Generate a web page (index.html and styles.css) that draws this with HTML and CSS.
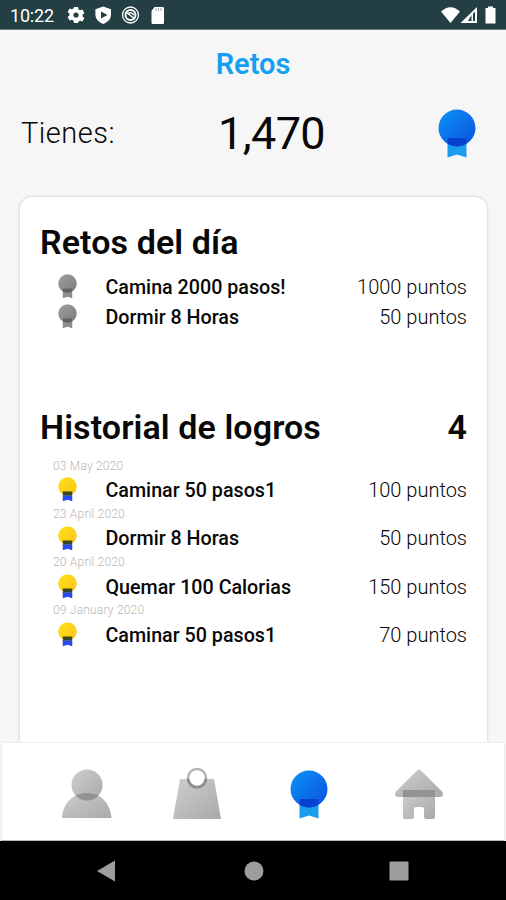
FILE: index.html
```html
<!DOCTYPE html>
<html lang="es">
<head>
<meta charset="utf-8">
<title>Retos</title>
<link rel="stylesheet" href="styles.css">
</head>
<body>
<svg class="defs" aria-hidden="true">
  <defs>
    <linearGradient id="blue" x1="0" y1="0" x2="1" y2="1"><stop offset="0" stop-color="#0c93f8"/><stop offset="1" stop-color="#0b51dc"/></linearGradient>
    <linearGradient id="dim" x1="0" y1="0" x2="1" y2="1"><stop offset="0" stop-color="#a0a0a0"/><stop offset="1" stop-color="#7b7b7b"/></linearGradient>
    <linearGradient id="gold" x1="0" y1="0" x2="1" y2="1"><stop offset="0" stop-color="#ffdf18"/><stop offset="1" stop-color="#fbc515"/></linearGradient>
    <linearGradient id="gray" x1="0" y1="0" x2="1" y2="1"><stop offset="0" stop-color="#cecece"/><stop offset="1" stop-color="#a9a9a9"/></linearGradient>
    <clipPath id="disc"><circle cx="19" cy="19" r="18.5"/></clipPath>
    <clipPath id="body"><path d="M0 49C1 34 11 24 25 24S48 34 49.500 49z"/></clipPath>
    <symbol id="medal" viewBox="0 0 38 49">
      <path class="ribbon" d="M9.500 28H28.500V48.500L19 45.500L9.500 48.500z"/>
      <circle class="disc" cx="19" cy="19" r="18.500"/>
      <path class="overlap" clip-path="url(#disc)" d="M9.500 29H28.500V38H9.500z"/>
    </symbol>
  </defs>
</svg>
<div class="screen">
  <header class="status">
    <span class="clock">10:22</span>
    <svg class="system" width="100" height="20" viewBox="0 0 100 20">
      <g fill="#fff">
        <path d="M7 1h4l.6 2.400 1.500.9 2.300-.8 2 3.400-1.800 1.700v1.800l1.800 1.700-2 3.400-2.300-.8-1.500.9L11 17H7l-.6-2.400-1.500-.9-2.300.8-2-3.400 1.800-1.700V7.600L.6 5.900l2-3.400 2.300.8 1.500-.9z"/>
        <path d="M36.200.5 44 3.300V8.500c0 4.500-3 7.500-7.800 9.500-4.800-2-7.800-5-7.800-9.500V3.300z"/>
        <path d="M87.500 1h8c1 0 1.500.5 1.500 1.500v14c0 1-.5 1.500-1.500 1.500h-9.500c-1 0-1.500-.5-1.500-1.500V5z"/>
      </g>
      <circle cx="9" cy="9" r="2.600" fill="#233f43"/>
      <path d="M34 5.500 40.500 9 34 12.500z" fill="#233f43"/>
      <g fill="none" stroke="#fff"><circle cx="63.500" cy="9" r="8" stroke-width="1.300"/><circle cx="63.500" cy="9" r="5" stroke-width="2"/><path d="M59.500 6.500 68 13M61 7.500Q64 5.500 67 9" stroke-width="1.500"/></g>
      <path d="M89 2v3M91.500 2v3M94 2v3" stroke="#9aa8aa" stroke-width="1"/>
    </svg>
    <svg class="signal" width="58" height="20" viewBox="0 0 58 20">
      <path fill="#fff" d="M1 5.500Q10.500-3 20 5.500L10.500 17z"/>
      <path fill="#fff" fill-rule="evenodd" d="M20.500 17 37 1v16zM28 15h3.500V9zM33 7.500V15h2V5.500z"/>
      <path fill="#fff" d="M48 2V.5h5V2h2.500v15.500h-10V2z"/>
    </svg>
  </header>
  <h1 class="title">Retos</h1>
  <section class="balance">
    <span class="label">Tienes:</span>
    <span class="total">1,470</span>
    <svg class="medal blue"><use href="#medal"/></svg>
  </section>
  <main class="card">
    <h2 class="heading"><span>Retos del día</span></h2>
    <ul class="list today">
      <li class="row"><svg class="medal small dim"><use href="#medal"/></svg><span class="name">Camina 2000 pasos!</span><span class="points">1000 puntos</span></li>
      <li class="row"><svg class="medal small dim"><use href="#medal"/></svg><span class="name">Dormir 8 Horas</span><span class="points">50 puntos</span></li>
    </ul>
    <h2 class="heading"><span>Historial de logros</span><span>4</span></h2>
    <ul class="list past">
      <li><time class="date">03 May 2020</time><div class="row"><svg class="medal small gold"><use href="#medal"/></svg><span class="name">Caminar 50 pasos1</span><span class="points">100 puntos</span></div></li>
      <li><time class="date">23 April 2020</time><div class="row"><svg class="medal small gold"><use href="#medal"/></svg><span class="name">Dormir 8 Horas</span><span class="points">50 puntos</span></div></li>
      <li><time class="date">20 April 2020</time><div class="row"><svg class="medal small gold"><use href="#medal"/></svg><span class="name">Quemar 100 Calorias</span><span class="points">150 puntos</span></div></li>
      <li><time class="date">09 January 2020</time><div class="row"><svg class="medal small gold"><use href="#medal"/></svg><span class="name">Caminar 50 pasos1</span><span class="points">70 puntos</span></div></li>
    </ul>
  </main>
  <nav class="tabs">
    <svg width="50" height="50" viewBox="0 0 50 50"><path fill="url(#gray)" d="M0 49C1 34 11 24 25 24S48 34 49.500 49z"/><circle fill="url(#gray)" cx="25" cy="16" r="15.500"/><circle clip-path="url(#body)" fill="#929292" cx="25" cy="16" r="15.500"/></svg>
    <svg class="bag" width="48" height="52" viewBox="0 0 48 52"><path fill="url(#gray)" d="M7 12H41L48 52H0z"/><circle cx="24" cy="11" r="7.500" fill="#fff"/><circle cx="24" cy="11" r="9" fill="none" stroke="#b5b5b5" stroke-width="2.500"/><path d="M15 11.500a9 9 0 0 0 18 0" fill="none" stroke="#8c8c8c" stroke-width="2.500"/></svg>
    <svg class="medal blue award"><use href="#medal"/></svg>
    <svg width="48" height="50" viewBox="0 0 48 50"><path fill="url(#gray)" d="M8 21H40V48Q40 50 38 50H31Q29 50 29 48V40Q29 38 27 38H21Q19 38 19 40V48Q19 50 17 50H10Q8 50 8 48z"/><path fill="url(#gray)" d="M22.500 1Q24 0 25.500 1L47 22.500Q49 25 47 27.500L45.500 28H2.500L1 27.500Q-1 25 1 22.500z"/><path fill="#939393" d="M8 21H40V28H8z"/></svg>
  </nav>
  <footer class="system-nav">
    <svg width="18" height="22" viewBox="0 0 18 22"><path fill="#9d9d9d" d="M0 11 18 .5V21.500z"/></svg>
    <svg width="20" height="20" viewBox="0 0 20 20"><circle fill="#9d9d9d" cx="10" cy="10" r="9.500"/></svg>
    <svg width="20" height="20" viewBox="0 0 20 20"><rect fill="#9d9d9d" x=".5" y=".5" width="19" height="19" rx="1"/></svg>
  </footer>
</div>
</body>
</html>
```
FILE: styles.css
```css
* { box-sizing: border-box; margin: 0; padding: 0; }
body { font-family: Roboto, "Liberation Sans", sans-serif; color: #080808; background: #f6f6f6; }
svg { display: block; flex: none; }
.defs { position: absolute; width: 0; height: 0; }
.screen { display: flex; flex-direction: column; width: 506px; height: 900px; overflow: hidden; }
.status { display: flex; align-items: center; flex: none; height: 30px; padding: 3px 8px 0 10px; background: #233f43; border-bottom: 1px solid #6d7f82; color: #fff; }
.clock { width: 57px; font-size: 18px; line-height: 26px; letter-spacing: -.2px; white-space: nowrap; }
.signal { margin-left: auto; }
.title { height: 68px; padding-top: 1px; font-size: 29px; line-height: 66px; font-weight: 600; text-align: center; color: #149ff1; }
.balance { display: flex; align-items: center; height: 70px; padding: 0 30px 0 21px; }
.label { width: 197px; font-size: 29px; line-height: 34px; padding-bottom: 1px; font-weight: 300; letter-spacing: .5px; }
.total { flex: 1; padding-top: 2px; font-size: 45px; line-height: 70px; font-weight: 400; letter-spacing: -.6px; }
.medal { width: 38px; height: 49px; }
.small { width: 19px; height: 24.500px; margin: 0 28.500px 0 18px; }
.blue { --disc: url(#blue); --ribbon: #1b9ced; --overlap: #0841cf; }
.dim { --disc: url(#dim); --ribbon: #8d8d8d; --overlap: #626262; }
.gold { --disc: url(#gold); --ribbon: #284af2; --overlap: #384324; }
.disc { fill: var(--disc); }
.ribbon { fill: var(--ribbon); }
.overlap { fill: var(--overlap); }
.card { flex: 1; min-height: 0; margin: 29px 19px 0 20px; padding: 24px 20px 0; overflow: hidden; background: #fff; border-radius: 12px 12px 0 0; box-shadow: 0 0 3px rgba(0, 0, 0, .22); }
.heading { display: flex; justify-content: space-between; font-size: 34px; line-height: 42px; font-weight: 600; letter-spacing: .1px; white-space: nowrap; }
.list { list-style: none; }
.today { height: 143px; padding-top: 8px; }
.past { padding-top: 8.500px; }
.row { display: flex; align-items: center; height: 30px; font-size: 20px; white-space: nowrap; }
.name { flex: 1; padding-top: 2px; font-size: 19.700px; font-weight: 500; }
.points { padding-top: 1px; font-weight: 300; }
.past li { height: 48.300px; }
.date { display: block; height: 18.200px; margin-left: 13px; font-size: 12px; line-height: 18px; font-weight: 300; letter-spacing: .2px; color: #b8b8b8; }
.tabs { display: grid; grid-template-columns: repeat(4, 110.700px); justify-content: center; justify-items: center; align-items: center; flex: none; height: 99px; margin: 0 1px; padding: 4px 0 0; background: #fff; border: 1px solid #eee; border-bottom: 1px solid #b7b7b7; }
.bag { margin: 0 2px 2px 0; }
.award { margin: 1px 0 0 1px; }
.system-nav { display: grid; grid-template-columns: 147px 1fr 117px; align-items: center; flex: none; height: 59px; padding-left: 97px; background: #000; }
```
